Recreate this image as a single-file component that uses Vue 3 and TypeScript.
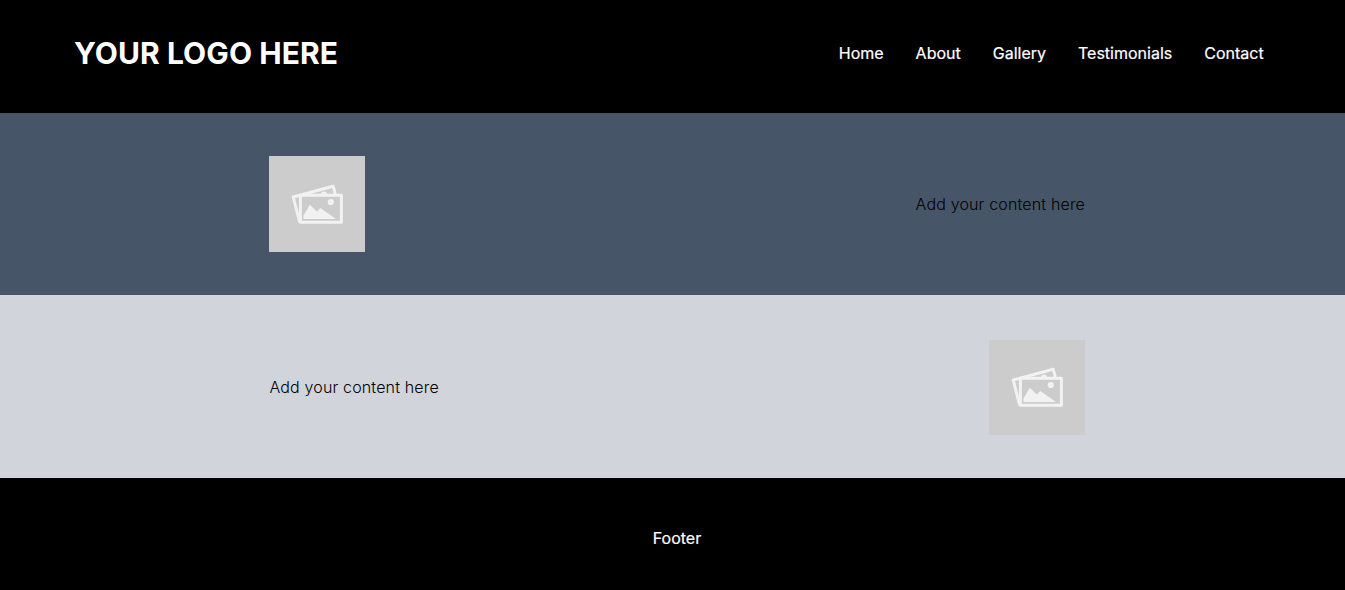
<script setup lang="ts">
const links: string[] = ['Home', 'About', 'Gallery', 'Testimonials', 'Contact']
const sections: { tone: string; imageFirst: boolean }[] = [
  { tone: 'slate', imageFirst: true },
  { tone: 'light', imageFirst: false },
]
</script>

<template>
  <div class="page">
    <header class="header">
      <h1 class="logo">YOUR LOGO HERE</h1>
      <nav class="nav">
        <a v-for="link in links" :key="link">{{ link }}</a>
      </nav>
    </header>
    <section v-for="s in sections" :key="s.tone" class="band" :class="[s.tone, { reverse: !s.imageFirst }]">
      <svg class="placeholder" viewBox="0 0 96 96" preserveAspectRatio="xMidYMax slice">
        <rect width="96" height="96" fill="#ccc" />
        <g fill="none" stroke="#f2f2f2" stroke-width="3" stroke-linejoin="round">
          <rect x="31.4" y="39.2" width="41" height="27.1" />
          <path d="M30.6 66L24.2 41L64.2 30.2L66.3 38" />
        </g>
        <g fill="#f2f2f2">
          <path d="M34.5 63V59.5L40.7 48.7L48 55.5L51.3 52L67 63Z" />
          <circle cx="61.8" cy="46" r="3.1" />
          <path d="M52 38.5a3 3 0 0 1 6 0z" />
        </g>
      </svg>
      <p>Add your content here</p>
    </section>
    <footer class="footer">Footer</footer>
  </div>
</template>

<style>
body { margin: 0; }
</style>

<style scoped>
.page {
  height: 590px;
  display: flex;
  flex-direction: column;
  overflow: hidden;
  font: 400 16px/24px Inter, "Liberation Sans", sans-serif;
}
.header {
  height: 113px;
  box-sizing: border-box;
  padding: 0 81.4px 7px 74px;
  display: flex;
  align-items: center;
  justify-content: space-between;
  background: #000;
  color: #fff;
}
.logo { margin: 0; font-size: 30px; line-height: 40px; font-weight: 700; letter-spacing: 0.08px; }
.nav { display: flex; gap: 32px; -webkit-text-stroke: 0.2px #fff; }
.band {
  height: 182px;
  box-sizing: border-box;
  padding: 0 260px 0 269px;
  display: flex;
  align-items: center;
  justify-content: space-between;
  font-weight: 300;
  letter-spacing: 0.16px;
  color: #000;
}
.slate { background: #475569; }
.light { height: 183px; padding-top: 2px; padding-left: 269.4px; background: #d1d5db; }
.light .placeholder { height: 95px; }
.reverse { flex-direction: row-reverse; }
.placeholder { width: 96px; height: 96px; display: block; }
.band p { margin: 0; }
.light p { margin-top: -1px; }
.footer {
  flex: 1;
  display: flex;
  align-items: center;
  justify-content: center;
  padding: 8px 0 0 9px;
  background: #000;
  color: #fff;
  -webkit-text-stroke: 0.2px #fff;
}
</style>
